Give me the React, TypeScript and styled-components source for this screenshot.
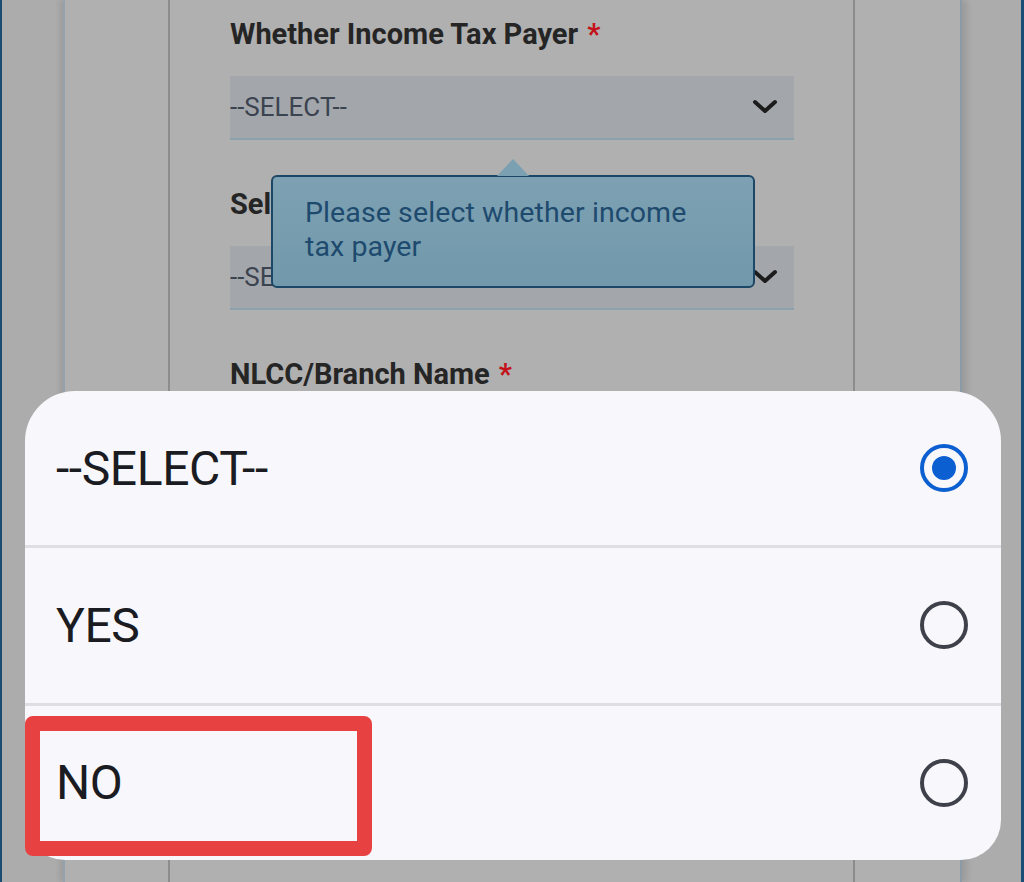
import styled, { createGlobalStyle } from 'styled-components'

const GlobalStyle = createGlobalStyle`
  html, body {
    margin: 0;
    padding: 0;
    background: #adadad;
    font-family: Roboto, "Noto Sans", "Liberation Sans", sans-serif;
  }
  * { box-sizing: border-box; }
`

const Screen = styled.div`
  position: relative;
  width: 1024px;
  height: 882px;
  overflow: hidden;
  display: flex;
  background: #acacac;
  border-left: 2px solid #1b4d74;
  border-right: 3px solid #1b4d74;
  padding: 0 59px 0 61px;
`

const Card = styled.div`
  flex: 1;
  display: flex;
  background: #b0b0b0;
  border-left: 2px solid #94a2ae;
  border-right: 2px solid #8b9aa7;
  box-shadow: -4px 0 5px rgba(0, 0, 0, 0.08), 5px 0 6px rgba(0, 0, 0, 0.1);
  padding: 0 105px 0 103px;
`

const Column = styled.div`
  flex: 1;
  border-left: 2px solid #8c8c8c;
  border-right: 2px solid #8c8c8c;
  padding: 19px 59px 0 60px;
`

const Field = styled.div`
  margin-bottom: 49px;
`

const Label = styled.div`
  font-size: 29px;
  line-height: 30px;
  font-weight: 700;
  color: #252525;
  white-space: nowrap;
  margin-bottom: 27px;

  span {
    color: #c4121a;
    margin-left: 9px;
  }
`

const SelectBox = styled.div`
  height: 64px;
  display: flex;
  align-items: center;
  justify-content: space-between;
  background: #a3a7ab;
  border-bottom: 2px solid #8ba1ae;
  padding-right: 16px;
  font-size: 26px;
  color: #3b4350;
`

const Chevron = () => (
  <svg width="26" height="16" viewBox="0 0 26 16">
    <polyline points="3,3 13,12 23,3" fill="none" stroke="#1c1c1c" strokeWidth="4" strokeLinecap="round" strokeLinejoin="round" />
  </svg>
)

const Tooltip = styled.div`
  position: absolute;
  left: 269px;
  top: 175px;
  width: 484px;
  height: 113px;
  background: linear-gradient(#7da1b3, #7199ab);
  border: 2px solid #1d4766;
  border-radius: 6px;
  padding: 19px 40px 0 32px;
  font-size: 28.5px;
  line-height: 34px;
  color: #1e4a6e;
  letter-spacing: 0.1px;

  &::before {
    content: '';
    position: absolute;
    left: 224px;
    top: -18px;
    border-left: 16px solid transparent;
    border-right: 16px solid transparent;
    border-bottom: 17px solid #7aa0b2;
  }
`

const Sheet = styled.div`
  position: absolute;
  left: 23px;
  top: 391px;
  width: 976px;
  height: 469px;
  background: #f8f8fc;
  border-radius: 50px 50px 40px 40px;
  display: flex;
  flex-direction: column;
  overflow: hidden;
`

const OptionRow = styled.div<{ $last?: boolean }>`
  flex: 1;
  display: flex;
  align-items: center;
  justify-content: space-between;
  padding: 0 31px 0 31px;
  border-bottom: ${(p) => (p.$last ? 'none' : '3px solid #dedee4')};
  font-size: 48px;
  color: #1b1b22;
  letter-spacing: -0.4px;
`

const Radio = ({ checked }: { checked?: boolean }) => (
  <svg width="52" height="52" viewBox="0 0 52 52">
    <circle cx="26" cy="26" r="22" fill="none" stroke={checked ? '#0b5fd0' : '#3f414a'} strokeWidth="4" />
    {checked && <circle cx="26" cy="26" r="12" fill="#0b5fd0" />}
  </svg>
)

const Highlight = styled.div`
  position: absolute;
  left: 23px;
  top: 716px;
  width: 347px;
  height: 140px;
  border: 15px solid #e84142;
  border-radius: 8px;
`

function App() {
  const options = ['--SELECT--', 'YES', 'NO']

  return (
    <>
      <GlobalStyle />
      <Screen>
        <Card>
          <Column>
            <Field>
              <Label>Whether Income Tax Payer<span>*</span></Label>
              <SelectBox>--SELECT--<Chevron /></SelectBox>
            </Field>
            <Field>
              <Label>Select Bank<span>*</span></Label>
              <SelectBox>--SELECT--<Chevron /></SelectBox>
            </Field>
            <Field>
              <Label>NLCC/Branch Name<span>*</span></Label>
            </Field>
          </Column>
        </Card>
        <Tooltip>Please select whether income tax payer</Tooltip>
        <Sheet>
          {options.map((o, i) => (
            <OptionRow key={o} $last={i === options.length - 1}>
              {o}
              <Radio checked={i === 0} />
            </OptionRow>
          ))}
        </Sheet>
        <Highlight />
      </Screen>
    </>
  )
}

export default App
